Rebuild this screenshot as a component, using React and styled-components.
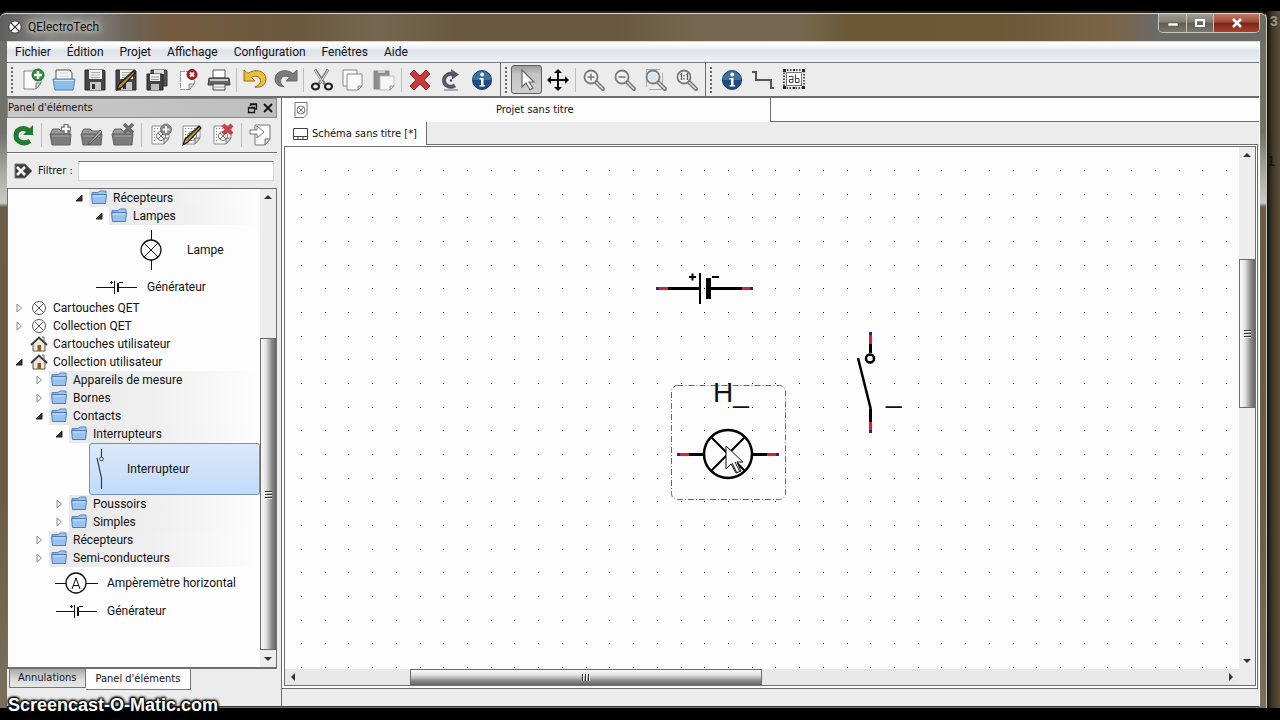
import React from "react";
import styled, { createGlobalStyle, css } from "styled-components";

const ui = 'Roboto, "Open Sans", sans-serif';
const small = '"DejaVu Sans Condensed", "DejaVu Sans", sans-serif';
const line = "#6e6e6e";
const face = "#ececec";
const paper = "#fdfdfd";

const GlobalStyle = createGlobalStyle`
  * { box-sizing: border-box; }
  body { margin: 0; background: #000; overflow: hidden; }
  button { font: inherit; color: inherit; background: none; border: 0; padding: 0; margin: 0; }
  svg { display: block; flex: none; }
`;

/* ---------- desktop and window frame ---------- */

const Desktop = styled.div`
  position: relative;
  height: 100vh;
  display: flex;
  padding: 11px 0 12px;
  background: #000;
  font: 12px/18px ${ui};
  color: #111;
`;

const Wallpaper = styled.aside`
  width: 13px;
  flex: none;
  overflow: hidden;
  display: flex;
  flex-direction: column;
  gap: 120px;
  background: linear-gradient(90deg, #14120c, #3d3626 40%, #5a4f38);
`;

const WallpaperText = styled.div`
  color: ${(p) => (p.$dark ? "#17150f" : "#96938c")};
  font: bold 14px/20px "Liberation Sans", sans-serif;
  padding-left: ${(p) => (p.$dark ? 0 : 3)}px;
`;

const Window = styled.div`
  flex: 1;
  min-width: 0;
  display: flex;
  flex-direction: column;
  padding: 0 6px 1px 7px;
  border-top: 2px solid #2b2720;
  border-right: 1px solid #c9c5bb;
  border-radius: 7px 7px 0 0;
  background: linear-gradient(#71716b, #72716c 120px, #a9a9a6 160px, #c9c9c7 190px, #6b5d45 194px, #6a5c44 480px, #7a705c);
`;

const TitleBar = styled.header`
  height: 28px;
  flex: none;
  margin: 0 -6px 0 -7px;
  padding: 0 6px 0 8px;
  display: flex;
  align-items: flex-start;
  border-top: 1px solid #d8d6d0;
  border-radius: 6px 6px 0 0;
  background: linear-gradient(90deg, #5e5e5c 0, #8a8883 50px, #7c7973 100px, #6c6357 130px, #74593e 170px, #6b5a40 300px, #75664f 380px, #6a5940 460px, #6a5940 620px, #766850 700px, #766850 800px, #6a5736 850px, #6b5938 1000px, #7a6448 1110px, #6b6b68 1160px);
`;

const Title = styled.h1`
  flex: 1;
  margin: 0;
  display: flex;
  align-items: center;
  gap: 6px;
  height: 26px;
  font: 12px/18px ${ui};
  color: #0c0c0c;
  text-shadow: 0 0 6px #cfcfcf, 0 0 10px #bdbdbd, 0 0 4px #cfcfcf, 0 0 12px #a9a9a9;
`;

const WindowButtons = styled.div`
  display: flex;
  height: 19px;
  border: 1px solid #c8c4bc;
  border-top: 0;
  border-radius: 0 0 5px 5px;
  overflow: hidden;
`;

const WindowButton = styled.button`
  width: ${(p) => (p.$close ? 46 : 27)}px;
  display: flex;
  align-items: center;
  justify-content: center;
  background: ${(p) =>
    p.$close
      ? "linear-gradient(#c07a68, #a04a38 45%, #7a2415 50%, #a8442c)"
      : "linear-gradient(#a09c94, #827e76 45%, #605d56 50%, #7b7870)"};
  & + & { border-left: 1px solid #c8c4bc; }
`;

const Client = styled.div`
  flex: 1;
  min-height: 0;
  display: flex;
  flex-direction: column;
  border: 1px solid #3a3a38;
  border-top: 1px solid #d8d8d8;
  border-left: 0;
  border-right-color: #fff;
  background: ${face};
`;

const MenuBar = styled.nav`
  height: 21px;
  flex: none;
  display: flex;
  background: linear-gradient(#fff, #f4f6f9 25%, #dde2e9 45%, #e6eaf0 75%, #eef1f6);
  border-bottom: 1px solid #777;
`;

const MenuItem = styled.button`
  padding: 0 8px;
  height: 20px;
  line-height: 20px;
`;

/* ---------- tool bars ---------- */

const ToolRow = styled.div`
  height: 35px;
  flex: none;
  display: flex;
  border-bottom: 2px solid ${line};
  background: ${face};
`;

const ToolBar = styled.div`
  display: flex;
  align-items: center;
  padding-right: 3px;
  ${(p) => p.$divided && css`border-right: 1px solid ${line};`}
`;

const Handle = styled.span`
  width: 10px;
  height: 26px;
  flex: none;
  background: radial-gradient(circle at 1px 1px, #666 1px, transparent 1px) 4px 0 / 10px 4px;
`;

const ToolButton = styled.button`
  width: 31px;
  height: 29px;
  flex: none;
  display: flex;
  align-items: center;
  justify-content: center;
  border: 1px solid transparent;
  border-radius: 3px;
  ${(p) =>
    p.$pressed &&
    css`
      border-color: #5c5c5c;
      background: linear-gradient(#9c9c9c, #c4c4c4 30%, #cfcfcf);
    `}
`;

const Separator = styled.span`
  width: ${(p) => (p.$wide ? 7 : 5)}px;
  height: 24px;
  flex: none;
  background: linear-gradient(#bdbdbd, #bdbdbd) center / 1px 100% no-repeat;
`;

/* ---------- element dock ---------- */

const Body = styled.div`
  flex: 1;
  min-height: 0;
  display: flex;
`;

const Dock = styled.section`
  width: 270px;
  flex: none;
  display: flex;
  flex-direction: column;
  font: 11px/18px ${small};
`;

const DockTitle = styled.header`
  height: 20px;
  flex: none;
  display: flex;
  align-items: center;
  gap: 4px;
  padding-right: 2px;
  border: 1px solid #8a8a8a;
  background: linear-gradient(90deg, #c8c8c8, #bebebe);
`;

const DockName = styled.h2`
  flex: 1;
  margin: 0;
  font: 11px/18px ${small};
`;

const DockTools = styled.div`
  height: 35px;
  flex: none;
  display: flex;
  align-items: center;
  border-bottom: 1px solid ${line};
`;

const Filter = styled.label`
  height: 35px;
  flex: none;
  display: flex;
  align-items: center;
  padding: 0 3px 0 6px;
  border-top: 1px solid #fff;
`;

const FilterText = styled.span`
  width: 40px;
  margin-left: 5px;
`;

const FilterInput = styled.input`
  flex: 1;
  min-width: 0;
  height: 20px;
  border: 1px solid #d4d4d4;
  border-top-color: #777;
  background: #fff;
  font: 11px/18px ${small};
  padding: 0 4px;
`;

const TreeFrame = styled.div`
  flex: 1;
  min-height: 0;
  display: flex;
  border: 1px solid ${line};
  border-width: 1px 1px 2px;
  background: ${paper};
`;

const Tree = styled.ul`
  flex: 1;
  min-width: 0;
  margin: 0;
  padding: 0;
  list-style: none;
  overflow: hidden;
  font: 12px/18px ${ui};
`;

const TreeRow = styled.li`
  height: ${(p) => p.$height}px;
  display: flex;
  align-items: center;
  padding-left: ${(p) => 5 + 20 * p.$depth}px;
`;

const Twist = styled.span`
  width: 16px;
  flex: none;
`;

const RowLabel = styled.span`
  flex: 1;
  align-self: stretch;
  display: flex;
  align-items: center;
  gap: 5px;
  padding-left: 1px;
  white-space: nowrap;
  ${(p) => p.$folder && css`background: linear-gradient(90deg, #e9e9ea, #f0f0f0 50%, ${paper});`}
  ${(p) => p.$element && css`padding-left: 3px;`}
  ${(p) =>
    p.$selected &&
    css`
      padding-left: 2px;
      border: 1px solid #7591b3;
      border-radius: 3px;
      background: linear-gradient(#dde9f9, #c0dbfb);
    `}
`;

const DockTabs = styled.div`
  height: 37px;
  flex: none;
  display: flex;
  align-items: flex-start;
  padding-left: 2px;
`;

const DockTab = styled.button`
  height: ${(p) => (p.$active ? 21 : 19)}px;
  padding: 0 ${(p) => (p.$active ? 10 : 8)}px;
  line-height: ${(p) => (p.$active ? 20 : 18)}px;
  border: 1px solid #777;
  border-top: 0;
  background: ${(p) => (p.$active ? paper : "linear-gradient(#a9a9a9, #dedede 60%, #e6e6e6)")};
  & + & { border-left: 0; }
`;

/* ---------- scroll bars ---------- */

const ScrollBar = styled.div`
  display: flex;
  flex: none;
  background: ${(p) => (p.$across ? "#e8e8e8" : "#ededed")};
  flex-direction: ${(p) => (p.$across ? "row" : "column")};
  ${(p) => (p.$across ? "height" : "width")}: 16px;
`;

const ScrollArrow = styled.button`
  width: 16px;
  height: 16px;
  flex: none;
  display: flex;
  align-items: center;
  justify-content: center;
`;

const ScrollGap = styled.span`
  flex: ${(p) => p.$share} 1 0;
`;

const ScrollThumb = styled.span`
  flex: ${(p) => p.$share} 1 0;
  display: flex;
  align-items: center;
  justify-content: center;
  border: 1px solid #6a6a6a;
  background: linear-gradient(
    ${(p) => (p.$across ? "180deg" : "90deg")},
    #fafafa, #e4e4e4 35%, #b9b9b9 55%, #858585 80%, #6d6d6d
  );
`;

/* ---------- project area ---------- */

const Project = styled.main`
  flex: 1;
  min-width: 0;
  margin-left: 4px;
  display: flex;
  flex-direction: column;
  border-left: 1px solid ${line};
  font: 11px/18px ${small};
`;

const ProjectTabs = styled.div`
  height: 24px;
  flex: none;
  display: flex;
`;

const ProjectTab = styled.button`
  width: 50%;
  display: flex;
  align-items: center;
  padding: 0 8px 0 12px;
  background: ${paper};
  border-right: 1px solid ${line};
`;

const ProjectName = styled.span`
  flex: 1;
  text-align: center;
`;

const ProjectRest = styled.span`
  flex: 1;
  background: ${paper};
  border-bottom: 1px solid ${line};
`;

const SheetTabs = styled.div`
  height: 23px;
  flex: none;
  display: flex;
  align-items: stretch;
`;

const SheetTab = styled.button`
  display: flex;
  align-items: center;
  gap: 4px;
  padding: 0 9px 0 11px;
  background: ${paper};
  border-right: 1px solid ${line};
`;

const SheetRest = styled.span`
  flex: 1;
  margin-right: 1px;
  border-bottom: 1px solid ${line};
`;

const SheetFrame = styled.div`
  flex: 1;
  min-height: 0;
  display: flex;
  margin: 0 1px 17px 0;
  padding: 1px 1px 2px 2px;
  border: 1px solid ${line};
  border-width: 0 1px 1px 0;
  background: #fff;
`;

const SheetView = styled.div`
  flex: 1;
  min-width: 0;
  display: grid;
  grid-template-columns: minmax(0, 1fr) 16px;
  grid-template-rows: minmax(0, 1fr) 16px;
  border: 1px solid ${line};
  background: ${face};
`;

const Canvas = styled.div`
  position: relative;
  overflow: hidden;
  background: ${paper};
`;

const Node = styled.div`
  position: absolute;
  left: ${(p) => p.$x}px;
  top: ${(p) => p.$y}px;
`;

const Watermark = styled.div`
  position: absolute;
  left: 8px;
  bottom: 4px;
  font: bold 18px/22px "Liberation Sans", Arial, sans-serif;
  color: #fff;
  text-shadow: 0 0 2px #000, 1px 1px 2px #000, -1px -1px 2px #000, 1px -1px 2px #000, -1px 1px 2px #000, 0 0 4px #000;
`;

/* ---------- icons ---------- */

const Page = ({ dots }) => (
  <g>
    <path d="M3 3h17v12l-5 6H3z" fill="#fbfbfb" stroke="#8b8b8b" />
    <path d="M20 15h-5v6z" fill="#ddd" stroke="#777" />
    {dots && (
      <g fill="none" stroke="#777">
        <path d="M5.500 5v15M5 5.500h13" strokeDasharray="1 2" />
        <circle cx="12" cy="13" r="4.500" />
        <path d="M9 10l6 6M15 10l-6 6" />
      </g>
    )}
  </g>
);

const Floppy = () => (
  <g>
    <path d="M2 2h19l1 1v19H2z" fill="#454545" stroke="#2b2b2b" />
    <path d="M6 2h13v9H6z" fill="#f2f2f2" />
    <path d="M8 4.500h9M8 7h9M8 9.500h9" stroke="#aaa" />
    <path d="M7 14h11v8H7z" fill="#c9c9c9" />
    <path d="M9 16h3v5H9z" fill="#333" />
  </g>
);

const DarkFolder = () => (
  <g>
    <path d="M2 9l2-3h6l2 2h9v4H2z" fill="#9a9a9a" stroke="#666" />
    <path d="M1 11h21l-1 11H3z" fill="#7c7c7c" stroke="#626262" />
    <path d="M3 13h17" stroke="#a5a5a5" />
  </g>
);

const Pencil = ({ color = "#b8962e" }) => (
  <g>
    <path d="M3 22l2-6L19 3l2 2L8 19z" fill={color} stroke="#1d1d1d" strokeWidth="1.200" />
    <path d="M5 17L19 4" stroke="#2a2414" />
  </g>
);

const Lens = ({ children }) => (
  <g>
    <path d="M14 14l7 7" stroke="#777" strokeWidth="4" strokeLinecap="round" />
    <path d="M14 14l7 7" stroke="#ddd" strokeWidth="1.500" />
    <circle cx="9" cy="9" r="6.500" fill="#f4f4f4" stroke="#7a7a7a" strokeWidth="1.800" />
    {children}
  </g>
);

const icons = {
  new: (
    <g>
      <Page />
      <circle cx="17" cy="7" r="6" fill="#2c8f35" stroke="#1a6a24" />
      <path d="M17 3v8M13 7h8" stroke="#fff" strokeWidth="2.500" />
    </g>
  ),
  open: (
    <g>
      <path d="M4 12V2h14l2 3v8z" fill="#fafafa" stroke="#555" />
      <path d="M8 5h8M8 8h9" stroke="#ccc" />
      <path d="M1 11h22l-2 11H3z" fill="#8dbdea" stroke="#4a80b5" />
      <path d="M2 12.500h20" stroke="#cfe5fa" />
    </g>
  ),
  save: <Floppy />,
  saveAs: (
    <g>
      <Floppy />
      <Pencil />
    </g>
  ),
  saveAll: (
    <g>
      <path d="M6 2h15l1 1v15H6z" fill="#555" stroke="#333" />
      <path d="M9 2h10v4H9z" fill="#ddd" />
      <path d="M2 6h15l1 1v15H2z" fill="#444" stroke="#222" />
      <path d="M5 6h10v7H5z" fill="#eee" />
      <path d="M6 9h8M6 11.500h8" stroke="#999" />
      <path d="M6 16h8v6H6z" fill="#bbb" />
    </g>
  ),
  close: (
    <g>
      <path d="M4 3h14v13l-5 6H4z" fill="#fafafa" />
      <path d="M4.500 3v19M4 3.500h9M4 21.500h9M18.500 12v4" fill="none" stroke="#9a9a9a" strokeDasharray="5 1" />
      <path d="M18 16h-5v6z" fill="#ddd" stroke="#888" />
      <circle cx="16" cy="6.500" r="5" fill="#a92323" stroke="#701414" />
      <path d="M14 4.500l4 4M18 4.500l-4 4" stroke="#fff" strokeWidth="1.800" />
    </g>
  ),
  print: (
    <g>
      <path d="M6 2h12v8H6z" fill="#fff" stroke="#555" />
      <path d="M2 10h20l1 7H1z" fill="#666" stroke="#3c3c3c" />
      <path d="M3 12h18" stroke="#c5c5c5" strokeWidth="2" />
      <path d="M6 16h12v6H6z" fill="#f5f5f5" stroke="#444" />
      <path d="M7 19h10" stroke="#999" />
    </g>
  ),
  undo: (
    <path d="M1 2v11h11L8.500 9.500C12 7 17 8 17.500 12.500c.3 3-2 5-5.500 6.500 6 1 11-2 11-8C23 3 12 0 5 5.500z" fill="#ecc03a" stroke="#8f6c14" />
  ),
  redo: (
    <path d="M23 2v11H12l3.500-3.500C12 7 7 8 6.500 12.500c-.3 3 1 4.500 3.500 6C5 19 1 16 1 11 1 3 12 0 19 5.500z" fill="#7b7b7b" stroke="#686868" />
  ),
  cut: (
    <g fill="none" stroke="#222">
      <path d="M5 1.500l9.500 14.500M18 1.500L9 16" stroke="#777" strokeWidth="3" />
      <path d="M5 2l8 13M18 2l-8 13" stroke="#eee" />
      <ellipse cx="5.500" cy="18.500" rx="3.500" ry="3" strokeWidth="2.200" />
      <ellipse cx="18.500" cy="18.500" rx="3.500" ry="3" strokeWidth="2.200" />
    </g>
  ),
  copy: (
    <g fill="#fbfbfb" stroke="#888">
      <path d="M2 2h14v16H2z" />
      <path d="M6 6h15v12l-4 4H6z" />
      <path d="M21 18h-4v4z" fill="#ddd" />
    </g>
  ),
  paste: (
    <g>
      <path d="M2 3h15v18H2z" fill="#8e8e8e" stroke="#858585" />
      <path d="M6 2h7v3H6z" fill="#ccc" />
      <path d="M8 8h14v10l-4 4H8z" fill="#f7f7f7" stroke="#bbb" />
      <path d="M22 18h-4v4z" fill="#ddd" stroke="#999" />
    </g>
  ),
  remove: (
    <path d="M6 2l6 6 6-6 4 4-6 6 6 6-4 4-6-6-6 6-4-4 6-6-6-6z" fill="#c93a3c" stroke="#942024" />
  ),
  rotate: (
    <g>
      <path d="M15 6.500c-5-2-10 1-10 6s6 8 11 5" fill="none" stroke="#57576c" strokeWidth="4" />
      <path d="M12 1l8 5.500-7 5z" fill="#57576c" />
      <circle cx="12" cy="12.500" r="1.200" fill="#444" />
      <path d="M5 22h14" stroke="#aaa" strokeWidth="2" />
    </g>
  ),
  info: (
    <g>
      <circle cx="12" cy="12" r="9.500" fill="#1f4c86" stroke="#173c68" />
      <path d="M3 12a9 9 0 0 1 18 0z" fill="#41719f" />
      <path d="M9.500 10h4v7h1.500v1.500H9.500V17H11v-5.500H9.500z" fill="#fff" />
      <circle cx="12.200" cy="6.500" r="1.900" fill="#fff" />
    </g>
  ),
  select: (
    <path d="M7 2v17l4-4 4 7 3-2-4-6h5z" fill="#fff" stroke="#666" strokeWidth="1.200" />
  ),
  move: (
    <path d="M12 1l4 4h-3v6h6V8l4 4-4 4v-3h-6v6h3l-4 4-4-4h3v-6H5v3l-4-4 4-4v3h6V5H8z" fill="#0c0c0c" />
  ),
  zoomIn: (
    <Lens>
      <path d="M9 5.500v7M5.500 9h7" stroke="#777" strokeWidth="1.500" />
    </Lens>
  ),
  zoomOut: (
    <Lens>
      <path d="M5.500 9h7" stroke="#777" strokeWidth="1.500" />
    </Lens>
  ),
  zoomFit: (
    <g>
      <path d="M2 1.500h14M2.500 1v18M5 21.500h13M18.500 5v17" stroke="#aaa" />
      <Lens>
        <circle cx="9" cy="9" r="4.500" fill="#d5e6ee" />
      </Lens>
    </g>
  ),
  zoomOne: (
    <Lens>
      <path d="M5.500 7l1-1v6M11.500 7l1-1v6" fill="none" stroke="#555" strokeWidth="1.300" />
      <path d="M9 7v1.500M9 10v1.500" stroke="#555" strokeWidth="1.300" />
    </Lens>
  ),
  wire: <path d="M1 4h4v8h15v8M19 20h4" fill="none" stroke="#555" strokeWidth="2" />,
  textField: (
    <g fill="none" stroke="#222">
      <rect x="2" y="2" width="20" height="18" strokeWidth="1.500" strokeDasharray="1.500 1.500" />
      <path d="M1 1h3v3H1zM20 1h3v3h-3zM1 18h3v3H1zM20 18h3v3h-3zM11 1h2v2h-2zM11 19h2v2h-2z" fill="#222" stroke="none" />
      <rect x="4.500" y="4.500" width="15" height="13" fill="#fff" stroke="#777" />
      <path d="M7 8.500h4v6H7.500v-3H11M13.500 6.500v8h3.500v-4h-3.500" stroke="#444" />
    </g>
  ),
  reload: (
    <g>
      <path d="M18 8c-5-5-13-2-13 4.500s8 9.500 14 5.500" fill="none" stroke="#237a33" strokeWidth="5" />
      <path d="M22 2v10H12z" fill="#237a33" />
    </g>
  ),
  folderNew: (
    <g>
      <DarkFolder />
      <path d="M17 1v10M12 6h10" stroke="#6f6f6f" strokeWidth="5" />
      <path d="M17 2v8M13 6h8" stroke="#f5f5f5" strokeWidth="2.500" />
    </g>
  ),
  folderEdit: (
    <g>
      <DarkFolder />
      <path d="M8 21L20 7l2 2-12 12z" fill="#aaa" stroke="#555" />
    </g>
  ),
  folderDelete: (
    <g>
      <DarkFolder />
      <path d="M13 1l9 9M22 1l-9 9" stroke="#6c6c6c" strokeWidth="3.500" />
    </g>
  ),
  elementNew: (
    <g>
      <Page dots />
      <circle cx="17" cy="6.500" r="5.500" fill="#888" stroke="#777" />
      <path d="M17 3v7M13.500 6.500h7" stroke="#eee" strokeWidth="2" />
    </g>
  ),
  elementEdit: (
    <g>
      <Page dots />
      <Pencil color="#b99c44" />
    </g>
  ),
  elementDelete: (
    <g>
      <Page dots />
      <path d="M12 2l9 9M21 2l-9 9" stroke="#c34448" strokeWidth="4" />
    </g>
  ),
  importElement: (
    <g>
      <path d="M6 2h15v14l-5 6H6z" fill="#fbfbfb" stroke="#777" />
      <path d="M21 16h-5v6z" fill="#ddd" stroke="#777" />
      <path d="M1 7h7V3l7 6-7 6v-4H1z" fill="#fff" stroke="#777" />
    </g>
  ),
};

const Icon = ({ name }) => (
  <svg width="24" height="24" viewBox="0 0 24 24" aria-hidden="true">
    {icons[name]}
  </svg>
);

const LogoIcon = () => (
  <svg width="14" height="14" viewBox="0 0 16 16" fill="none" stroke="#333">
    <circle cx="8" cy="8" r="7" fill="#fff" />
    <path d="M3 3l10 10M13 3L3 13" strokeWidth="1.500" />
  </svg>
);

const treeIcons = {
  folder: (
    <svg width="18" height="16" viewBox="0 0 18 16">
      <path d="M2 4V2.500h6L10 1h6v4z" fill="#9cc4ee" stroke="#5d88b8" />
      <path d="M1.500 4.500h15l-1 9h-13z" fill="#98c2f0" stroke="#4f7db0" />
      <path d="M3 6h12" stroke="#cbe2fa" />
    </svg>
  ),
  collection: (
    <svg width="18" height="16" viewBox="0 0 18 16" fill="none" stroke="#555">
      <circle cx="9" cy="8" r="6.500" />
      <path d="M4.500 3.500l9 9M13.500 3.500l-9 9" />
    </svg>
  ),
  home: (
    <svg width="18" height="16" viewBox="0 0 18 16">
      <path d="M3 7l6-5 6 5v8H3z" fill="#f0e9da" stroke="#555" />
      <path d="M1 9l8-7.500L17 9" fill="none" stroke="#3c3c3c" strokeWidth="2" />
      <path d="M7.500 9h3.500v6H7.500z" fill="#8b5a24" />
      <path d="M12 1h2v4" fill="none" stroke="#666" />
    </svg>
  ),
  lamp: (
    <svg width="70" height="42" viewBox="0 0 70 42" fill="none" stroke="#111">
      <circle cx="39" cy="21" r="10" strokeWidth="1.300" />
      <path d="M39.500 1v10M39.500 31v10M32 14l14 14M46 14L32 28" />
    </svg>
  ),
  generator: (
    <svg width="50" height="16" viewBox="0 0 50 16" fill="none" stroke="#111">
      <path d="M4 8.500h18M27 8.500h18M22.500 2v13M18 3.500h3M19.500 2v3M27 3.500h4" />
      <path d="M26 4v9" strokeWidth="2" />
    </svg>
  ),
  ammeter: (
    <svg width="50" height="24" viewBox="0 0 50 24" fill="none" stroke="#111">
      <circle cx="24" cy="12" r="10" strokeWidth="1.300" />
      <path d="M3 12.500h11M34 12.500h12M20 18l4-11 4 11M21 14.500h6" />
    </svg>
  ),
  contact: (
    <svg width="30" height="42" viewBox="0 0 30 42" fill="none" stroke="#333f52">
      <path d="M9.500 1v9M5 10l4.500 20v11" strokeWidth="1.200" />
      <circle cx="9.500" cy="11" r="1.800" fill="#fff" />
    </svg>
  ),
};

const Twister = ({ open }) => (
  <svg width="12" height="12" viewBox="0 0 12 12">
    {open ? (
      <path d="M9 3v6H3z" fill="#333" stroke="#222" />
    ) : (
      <path d="M4 2l4.500 4L4 10z" fill="#fff" stroke="#888" />
    )}
  </svg>
);

const Arrow = ({ dir }) => (
  <svg width="8" height="8" viewBox="0 0 8 8" fill="#333">
    <path d={{ up: "M0 6l4-4 4 4z", down: "M0 2l4 4 4-4z", left: "M6 0v8L2 4z", right: "M2 0v8l4-4z" }[dir]} />
  </svg>
);

const Grip = ({ across }) => (
  <svg width="9" height="9" viewBox="0 0 9 9">
    <path d={across ? "M1.500 1v7M4.500 1v7M7.500 1v7" : "M1 1.500h7M1 4.500h7M1 7.500h7"} stroke="#333" />
    <path d={across ? "M2.500 1v7M5.500 1v7M8.500 1v7" : "M1 2.500h7M1 5.500h7M1 8.500h7"} stroke="#eee" />
  </svg>
);

/* ---------- data ---------- */

const menus = ["Fichier", "Édition", "Projet", "Affichage", "Configuration", "Fenêtres", "Aide"];

const mainTools = [
  [
    ["new", "Nouveau"], ["open", "Ouvrir"], ["save", "Enregistrer"], ["saveAs", "Enregistrer sous"],
    ["saveAll", "Enregistrer tout"], ["close", "Fermer"], ["print", "Imprimer"], null,
    ["undo", "Annuler"], ["redo", "Refaire"], null,
    ["cut", "Couper"], ["copy", "Copier"], ["paste", "Coller"], null,
    ["remove", "Supprimer"], ["rotate", "Pivoter"], ["info", "Propriétés"],
  ],
  [
    ["select", "Mode sélection", true], ["move", "Mode visualisation"], null,
    ["zoomIn", "Zoom avant"], ["zoomOut", "Zoom arrière"], ["zoomFit", "Zoom adapté"], ["zoomOne", "Pas de zoom"],
  ],
  [["info", "Propriétés du schéma"], ["wire", "Conducteurs"], ["textField", "Champ de texte"]],
];

const dockTools = [
  ["reload", "Recharger"], null,
  ["folderNew", "Nouvelle catégorie"], ["folderEdit", "Éditer la catégorie"], ["folderDelete", "Supprimer la catégorie"], null,
  ["elementNew", "Nouvel élément"], ["elementEdit", "Éditer l'élément"], ["elementDelete", "Supprimer l'élément"], null,
  ["importElement", "Importer un élément"],
];

const rows = [
  { text: "Récepteurs", depth: 3, icon: "folder", open: true },
  { text: "Lampes", depth: 4, icon: "folder", open: true },
  { text: "Lampe", depth: 4, icon: "lamp", height: 50 },
  { text: "Générateur", depth: 3, icon: "generator", height: 24 },
  { text: "Cartouches QET", depth: 0, icon: "collection", open: false },
  { text: "Collection QET", depth: 0, icon: "collection", open: false },
  { text: "Cartouches utilisateur", depth: 0, icon: "home" },
  { text: "Collection utilisateur", depth: 0, icon: "home", open: true },
  { text: "Appareils de mesure", depth: 1, icon: "folder", open: false },
  { text: "Bornes", depth: 1, icon: "folder", open: false },
  { text: "Contacts", depth: 1, icon: "folder", open: true },
  { text: "Interrupteurs", depth: 2, icon: "folder", open: true },
  { text: "Interrupteur", depth: 3, icon: "contact", height: 52, selected: true },
  { text: "Poussoirs", depth: 2, icon: "folder", open: false },
  { text: "Simples", depth: 2, icon: "folder", open: false },
  { text: "Récepteurs", depth: 1, icon: "folder", open: false },
  { text: "Semi-conducteurs", depth: 1, icon: "folder", open: false },
  { text: "Ampèremètre horizontal", depth: 1, icon: "ammeter", height: 32 },
  { text: "Générateur", depth: 1, icon: "generator", height: 24 },
];

/* ---------- parts ---------- */

const Tools = ({ items, wide }) =>
  items.map((tool, i) =>
    tool ? (
      <ToolButton key={i} aria-label={tool[1]} aria-pressed={tool[2]} $pressed={tool[2]}>
        <Icon name={tool[0]} />
      </ToolButton>
    ) : (
      <Separator key={i} $wide={wide} />
    )
  );

const Scroller = ({ across, before, thumb, after }) => (
  <ScrollBar $across={across}>
    <ScrollArrow aria-label={across ? "Gauche" : "Haut"}>
      <Arrow dir={across ? "left" : "up"} />
    </ScrollArrow>
    <ScrollGap $share={before} />
    <ScrollThumb $across={across} $share={thumb}>
      <Grip across={across} />
    </ScrollThumb>
    <ScrollGap $share={after} />
    <ScrollArrow aria-label={across ? "Droite" : "Bas"}>
      <Arrow dir={across ? "right" : "down"} />
    </ScrollArrow>
  </ScrollBar>
);

const GRID_STEP = 23.72;
let gridPath = "";
for (let row = 0; row < 60; row++) {
  for (let col = 0; col < 110; col++) {
    gridPath += `M${16 + Math.round(col * GRID_STEP)} ${23 + Math.round(row * 23.67)}h1v1h-1z`;
  }
}

const GridDots = () => (
  <svg width="2600" height="1400" fill="#111" aria-hidden="true">
    <path d={gridPath} shapeRendering="crispEdges" />
  </svg>
);

const BatteryNode = () => (
  <svg width="98" height="36" viewBox="0 0 98 36">
    <path d="M12 18.500h32M55 18.500h31" stroke="#000" strokeWidth="3" />
    <path d="M1 18.500h11M86 18.500h11" stroke="#d81f2c" strokeWidth="3" />
    <path d="M0 18.500h3M94 18.500h3" stroke="#3a1c86" strokeWidth="3" />
    <path d="M44 3v31" stroke="#000" strokeWidth="2" />
    <path d="M52.500 8v21" stroke="#000" strokeWidth="5" />
    <path d="M33 7h7M36.500 3.500v7M56 7h7" stroke="#000" strokeWidth="2" />
  </svg>
);

const LampNode = () => (
  <svg width="116" height="122" viewBox="0 0 116 122" overflow="visible">
    <rect x="0.500" y="6.500" width="114" height="114" rx="6" fill="none" stroke="#666" strokeDasharray="6 2 1 2" />
    <text x="42" y="23" fontFamily="Liberation Sans, Arial, sans-serif" fontSize="28" fill="#111">H_</text>
    <path d="M7 75.500h25M81 75.500h26" stroke="#000" strokeWidth="3" />
    <path d="M7 75.500h11M96 75.500h11" stroke="#d81f2c" strokeWidth="3" />
    <path d="M6 75.500h3M105 75.500h3" stroke="#3a1c86" strokeWidth="3" />
    <circle cx="57" cy="75" r="24" fill="none" stroke="#000" strokeWidth="2.500" />
    <path d="M40 58l34 34M74 58L40 92" stroke="#000" strokeWidth="2" />
    <path d="M55 67v23l5-5 5 9 5-2-4-9h6z" fill="#fff" stroke="#111" />
    <path d="M61 84l5 10M64 83l5 10" stroke="#111" />
  </svg>
);

const SwitchNode = () => (
  <svg width="50" height="104" viewBox="0 0 50 104">
    <path d="M14.500 2v20M14.500 78v22" stroke="#000" strokeWidth="3" />
    <path d="M14.500 3v10M14.500 91v11" stroke="#d81f2c" strokeWidth="3" />
    <path d="M14.500 1v3M14.500 99v3" stroke="#3a1c86" strokeWidth="3" />
    <path d="M2 27l12.500 50v14" fill="none" stroke="#000" strokeWidth="2.500" />
    <circle cx="14" cy="27.500" r="4" fill="#fff" stroke="#000" strokeWidth="2.500" />
    <text x="30" y="71" fontFamily="Liberation Sans, Arial, sans-serif" fontSize="28" fill="#111">_</text>
  </svg>
);

export default function App() {
  return (
    <Desktop>
      <GlobalStyle />
      <Window>
        <TitleBar>
          <Title>
            <LogoIcon />
            QElectroTech
          </Title>
          <WindowButtons>
            <WindowButton aria-label="Réduire">
              <svg width="12" height="10" viewBox="0 0 12 10">
                <path d="M1 5h10v3H1z" fill="#fff" stroke="#444" strokeWidth="0.500" />
              </svg>
            </WindowButton>
            <WindowButton aria-label="Agrandir">
              <svg width="12" height="10" viewBox="0 0 12 10">
                <path d="M2 2h8v6H2z" fill="none" stroke="#fff" strokeWidth="2" />
              </svg>
            </WindowButton>
            <WindowButton $close aria-label="Fermer">
              <svg width="12" height="10" viewBox="0 0 12 10">
                <path d="M2 1l8 8M10 1L2 9" stroke="#fff" strokeWidth="2.500" />
              </svg>
            </WindowButton>
          </WindowButtons>
        </TitleBar>

        <Client>
          <MenuBar>
            {menus.map((name) => (
              <MenuItem key={name}>{name}</MenuItem>
            ))}
          </MenuBar>

          <ToolRow>
            {mainTools.map((items, i) => (
              <ToolBar key={i} $divided={i < 2}>
                <Handle />
                <Tools items={items} />
              </ToolBar>
            ))}
          </ToolRow>

          <Body>
            <Dock>
              <DockTitle>
                <DockName>Panel d'éléments</DockName>
                <button aria-label="Détacher">
                  <svg width="12" height="12" viewBox="0 0 12 12" fill="none" stroke="#111">
                    <path d="M4.500 4V2h6v5H8M4 2.500h7M2.500 5.500v5h6v-5zM2 6h7" strokeWidth="1.300" />
                  </svg>
                </button>
                <button aria-label="Fermer le panneau">
                  <svg width="12" height="12" viewBox="0 0 12 12" stroke="#111">
                    <path d="M2 2l8 8M10 2l-8 8" strokeWidth="1.800" />
                  </svg>
                </button>
              </DockTitle>
              <DockTools>
                <Tools items={dockTools} wide />
              </DockTools>
              <Filter>
                <svg width="20" height="16" viewBox="0 0 20 16">
                  <path d="M2 1h10l7 7-7 7H2z" fill="#3c3c3c" stroke="#777" />
                  <path d="M4 4l8 8M12 4l-8 8" stroke="#fff" strokeWidth="2.500" />
                </svg>
                <FilterText>Filtrer :</FilterText>
                <FilterInput type="text" />
              </Filter>
              <TreeFrame>
                <Tree>
                  {rows.map((row, i) => (
                    <TreeRow key={i} $depth={row.depth} $height={row.height || 18}>
                      <Twist>{row.open !== undefined && <Twister open={row.open} />}</Twist>
                      <RowLabel $folder={row.icon === "folder"} $element={!!row.height} $selected={row.selected}>
                        {treeIcons[row.icon]}
                        {row.text}
                      </RowLabel>
                    </TreeRow>
                  ))}
                </Tree>
                <Scroller before={134} thumb={312} after={1} />
              </TreeFrame>
              <DockTabs>
                <DockTab>Annulations</DockTab>
                <DockTab $active>Panel d'éléments</DockTab>
              </DockTabs>
            </Dock>

            <Project>
              <ProjectTabs>
                <ProjectTab>
                  <svg width="14" height="18" viewBox="0 0 14 18" fill="none" stroke="#777">
                    <path d="M1 1.500h12v12l-3 3H1z" fill="#fff" />
                    <circle cx="7" cy="9" r="4" />
                    <path d="M4 6l6 6M10 6l-6 6" />
                  </svg>
                  <ProjectName>Projet sans titre</ProjectName>
                </ProjectTab>
                <ProjectRest />
              </ProjectTabs>
              <SheetTabs>
                <SheetTab>
                  <svg width="15" height="12" viewBox="0 0 15 12" fill="none" stroke="#444">
                    <path d="M0.500 0.500h14v11h-14zM0.500 8.500h14M5 8.500v3M10 8.500v3" />
                  </svg>
                  Schéma sans titre [*]
                </SheetTab>
                <SheetRest />
              </SheetTabs>
              <SheetFrame>
                <SheetView>
                  <Canvas>
                    <GridDots />
                    <Node $x={371} $y={123}><BatteryNode /></Node>
                    <Node $x={386} $y={232}><LampNode /></Node>
                    <Node $x={571} $y={184}><SwitchNode /></Node>
                  </Canvas>
                  <Scroller before={95} thumb={146} after={244} />
                  <Scroller across before={109} thumb={350} after={462} />
                </SheetView>
              </SheetFrame>
            </Project>
          </Body>
        </Client>
      </Window>
      <Wallpaper>
        <WallpaperText>3</WallpaperText>
        <WallpaperText $dark>1</WallpaperText>
      </Wallpaper>
      <Watermark>Screencast-O-Matic.com</Watermark>
    </Desktop>
  );
}
